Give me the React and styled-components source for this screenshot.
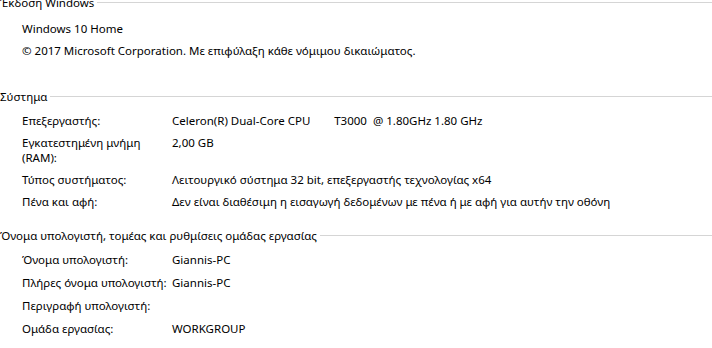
import React from "react";
import styled, { createGlobalStyle } from "styled-components";

const Global = createGlobalStyle`
  html, body { margin: 0; padding: 0; background: #ffffff; overflow: hidden; }
  body {
    font-family: "Noto Sans", "Open Sans", sans-serif;
    font-size: 11.5px;
    color: #000000;
  }
`;

const Page = styled.div`
  width: 712px;
  margin-top: -5px;
  display: flex;
  flex-direction: column;
`;

const Section = styled.section`
  display: flex;
  flex-direction: column;
  margin-bottom: ${(p) => p.$after || 0}px;
`;

const Header = styled.div`
  display: flex;
  align-items: center;
  height: 15px;
  line-height: 15px;
  white-space: nowrap;
`;

const HeaderLine = styled.div`
  flex: 1;
  height: 1px;
  margin-left: 3px;
  background: #d5d5d5;
`;

const Rows = styled.div`
  display: flex;
  flex-direction: column;
  gap: ${(p) => p.$gap || 0}px;
  margin-top: ${(p) => p.$top}px;
  padding-left: 22px;
`;

const Row = styled.div`
  display: grid;
  grid-template-columns: ${(p) => (p.$full ? "1fr" : "150px 1fr")};
  padding: 4px 0 3px;
  line-height: 15px;
`;

const Label = styled.div`
  white-space: ${(p) => (p.$nowrap ? "nowrap" : "normal")};
`;

const Value = styled.div`
  white-space: ${(p) => (p.$pre ? "pre" : "normal")};
`;

function Group({ title, top, after, gap, children }) {
  return (
    <Section $after={after}>
      <Header>
        <span>{title}</span>
        <HeaderLine />
      </Header>
      <Rows $top={top} $gap={gap}>{children}</Rows>
    </Section>
  );
}

export default function App() {
  return (
    <>
      <Global />
      <Page>
        <Group title="Έκδοση Windows" top={7} after={28}>
          <Row $full>
            <Value>Windows 10 Home</Value>
          </Row>
          <Row $full>
            <Value>© 2017 Microsoft Corporation. Με επιφύλαξη κάθε νόμιμου δικαιώματος.</Value>
          </Row>
        </Group>
        <Group title="Σύστημα" top={5} after={16}>
          <Row>
            <Label>Επεξεργαστής:</Label>
            <Value $pre>{"Celeron(R) Dual-Core CPU        T3000  @ 1.80GHz 1.80 GHz"}</Value>
          </Row>
          <Row>
            <Label>Εγκατεστημένη μνήμη (RAM):</Label>
            <Value>2,00 GB</Value>
          </Row>
          <Row>
            <Label>Τύπος συστήματος:</Label>
            <Value>Λειτουργικό σύστημα 32 bit, επεξεργαστής τεχνολογίας x64</Value>
          </Row>
          <Row>
            <Label>Πένα και αφή:</Label>
            <Value>Δεν είναι διαθέσιμη η εισαγωγή δεδομένων με πένα ή με αφή για αυτήν την οθόνη</Value>
          </Row>
        </Group>
        <Group title="Όνομα υπολογιστή, τομέας και ρυθμίσεις ομάδας εργασίας" top={5} gap={1}>
          <Row>
            <Label>Όνομα υπολογιστή:</Label>
            <Value>Giannis-PC</Value>
          </Row>
          <Row>
            <Label $nowrap>Πλήρες όνομα υπολογιστή:</Label>
            <Value>Giannis-PC</Value>
          </Row>
          <Row>
            <Label $nowrap>Περιγραφή υπολογιστή:</Label>
            <Value></Value>
          </Row>
          <Row>
            <Label>Ομάδα εργασίας:</Label>
            <Value>WORKGROUP</Value>
          </Row>
        </Group>
      </Page>
    </>
  );
}
